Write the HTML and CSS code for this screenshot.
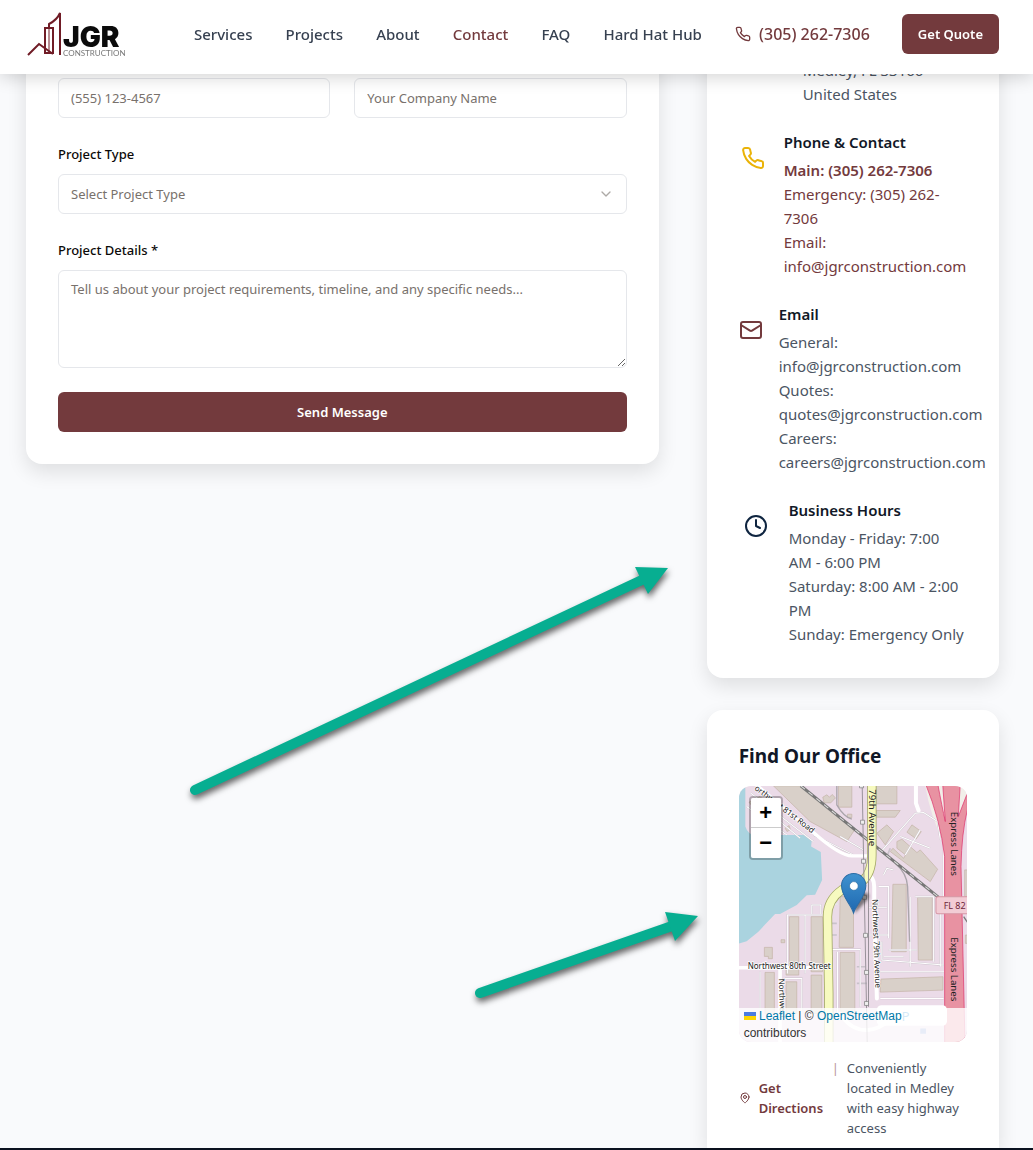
FILE: index.html
```html
<!DOCTYPE html>
<html lang="en">
<head>
<meta charset="utf-8">
<meta name="viewport" content="width=device-width, initial-scale=1">
<title>Contact | JGR Construction</title>
<link rel="stylesheet" href="styles.css">
</head>
<body>
<header class="header">
  <a class="logo" href="#" aria-label="JGR Construction">
    <svg width="104" height="50" viewBox="0 0 104 50">
      <g fill="none" stroke="#701c26" stroke-width="2">
        <path d="M2 45 L13 34 L27 44"/>
        <path d="M19 18 H27 V43 H19 Z" />
        <path d="M23 18 V43" stroke-width="1"/>
        <path d="M23 18 V14 Q31 10 34 3 V45"/>
      </g>
      <text class="logo-name" x="37" y="37">JGR</text>
      <text class="logo-sub" x="37" y="46">CONSTRUCTION</text>
    </svg>
  </a>
  <nav class="nav">
    <a href="#">Services</a>
    <a href="#">Projects</a>
    <a href="#">About</a>
    <a class="accent" href="#">Contact</a>
    <a href="#">FAQ</a>
    <a href="#">Hard Hat Hub</a>
    <a class="accent nav-phone" href="#">
      <svg class="icon" width="16" height="16" viewBox="0 0 24 24"><path d="M22 16.92v3a2 2 0 0 1-2.18 2 19.79 19.79 0 0 1-8.63-3.07 19.5 19.5 0 0 1-6-6 19.79 19.79 0 0 1-3.07-8.67A2 2 0 0 1 4.11 2h3a2 2 0 0 1 2 1.72 12.84 12.84 0 0 0 .7 2.81 2 2 0 0 1-.45 2.11L8.09 9.91a16 16 0 0 0 6 6l1.27-1.27a2 2 0 0 1 2.11-.45 12.84 12.84 0 0 0 2.81.7A2 2 0 0 1 22 16.92z"/></svg>
      (305) 262-7306
    </a>
  </nav>
  <button class="button" type="button">Get Quote</button>
</header>

<main class="main">
  <form class="card form-card">
    <div class="field-row">
      <input class="control" type="tel" placeholder="(555) 123-4567" aria-label="Phone">
      <input class="control" type="text" placeholder="Your Company Name" aria-label="Company">
    </div>
    <div class="field">
      <label for="type">Project Type</label>
      <div class="select-wrap">
        <select class="control" id="type"><option>Select Project Type</option></select>
        <svg class="icon chevron" width="16" height="16" viewBox="0 0 24 24"><path d="m6 9 6 6 6-6"/></svg>
      </div>
    </div>
    <div class="field">
      <label for="details">Project Details *</label>
      <textarea class="control details" id="details" placeholder="Tell us about your project requirements, timeline, and any specific needs..."></textarea>
    </div>
    <button class="button" type="submit">Send Message</button>
  </form>

  <aside class="sidebar">
    <section class="card info-card">
      <div class="info info-address">
        <p>Medley, FL 33166<br>United States</p>
      </div>
      <div class="info info-phone">
        <svg class="icon" width="24" height="24" viewBox="0 0 24 24"><path d="M22 16.92v3a2 2 0 0 1-2.18 2 19.79 19.79 0 0 1-8.63-3.07 19.5 19.5 0 0 1-6-6 19.79 19.79 0 0 1-3.07-8.67A2 2 0 0 1 4.11 2h3a2 2 0 0 1 2 1.72 12.84 12.84 0 0 0 .7 2.81 2 2 0 0 1-.45 2.11L8.09 9.91a16 16 0 0 0 6 6l1.27-1.27a2 2 0 0 1 2.11-.45 12.84 12.84 0 0 0 2.81.7A2 2 0 0 1 22 16.92z"/></svg>
        <div>
          <h3>Phone &amp; Contact</h3>
          <a class="strong" href="#">Main: (305) 262-7306</a>
          <a href="#">Emergency: (305) 262-<br>7306</a>
          <a href="#">Email:<br>info@jgrconstruction.com</a>
        </div>
      </div>
      <div class="info info-email">
        <svg class="icon" width="24" height="24" viewBox="0 0 24 24"><rect width="20" height="16" x="2" y="4" rx="2"/><path d="m22 7-8.97 5.7a1.94 1.94 0 0 1-2.06 0L2 7"/></svg>
        <div>
          <h3>Email</h3>
          <p>General:<br>info@jgrconstruction.com<br>Quotes:<br>quotes@jgrconstruction.com<br>Careers:<br>careers@jgrconstruction.com</p>
        </div>
      </div>
      <div class="info info-hours">
        <svg class="icon" width="24" height="24" viewBox="0 0 24 24"><circle cx="12" cy="12" r="10"/><path d="M12 6v6l4 2"/></svg>
        <div>
          <h3>Business Hours</h3>
          <p>Monday - Friday: 7:00<br>AM - 6:00 PM<br>Saturday: 8:00 AM - 2:00<br>PM<br>Sunday: Emergency Only</p>
        </div>
      </div>
    </section>

    <section class="card office-card">
      <h2>Find Our Office</h2>
      <div class="map">
        <svg class="map-canvas" viewBox="27 18 684 768" preserveAspectRatio="xMidYMid slice">
          <defs>
            <linearGradient id="pin" x1="0" y1="0" x2="0" y2="1"><stop offset="0" stop-color="#3f92cf"/><stop offset="1" stop-color="#1f68b0"/></linearGradient>
            <filter id="soft"><feGaussianBlur stdDeviation="5"/></filter>
            <path id="road81" d="M72 28 L250 164"/>
          </defs>
          <rect x="27" y="18" width="684" height="768" fill="#ebdbe8"/>
          <path d="M27 18H46V140Q55 168 80 165H225L245 180 243 200 272 216 276 300 255 344 230 346 200 375 150 402 135 402 85 455 50 484 27 490Z" fill="#aad3df"/>
          <path d="M585 18H711V60L690 170V786H645V200Q600 110 585 18Z" fill="#f2efe9"/>
          <path d="M690 200h21v586h-21z" fill="#ebdbe8"/>
          <g fill="#d9d0c9" stroke="#c2b2a5" stroke-width="2">
            <path d="M130 18H215L372 152 350 185 240 125Z"/>
            <path d="M278 52l12 -7 8 7 8-8 10 10-14 15-20 0z"/>
            <path d="M325 18H365V82H325Z M352 103h13v10h-13z M438 18H500V72H438Z M438 92H510L495 112H438Z"/>
            <path d="M440 160L470 135 490 155 465 195Z M545 135l28 20-15 22-28-20z M500 185L515 178 560 218 570 210 622 268 600 305 480 215 488 205 520 235 526 225 500 205Z"/>
            <path d="M488 313H528V515H484Z M562 352H606V540H564Z M452 597L638 590V630L450 636Z"/>
            <path d="M330 350H370V502H327Z M330 517H374V700H330Z M178 410H206V585H168V565H178Z M243 410H277V575H243Z M103 502h24v34h-12v-7h-12z M153 479h11v9h-11z"/>
            <path d="M105 577H133V700H105Z M168 605H200V700H168Z M243 585H275V700H243Z M703 270h8v80h-8z M705 465h6v25h-6z M57 67L90 50 120 80 80 95Z M165 145l12-8 4 12-10 6z"/>
          </g>
          <g fill="none" stroke="#c9c2ca" stroke-width="5">
            <path d="M172 580V405H278 M225 405V580 M90 575V700 M165 595H215V700 M305 372H325 M302 508H390V680 M322 515V700 M245 402V375H272V402 M445 320H475V475 M460 285 470 265 490 270 M455 485V540L640 555M450 575H642M450 655H640M540 350V560M555 350H610V545M630 350V560M640 110V380M455 212L555 100 580 98 622 125 630 180M525 225L570 150M510 170 600 205M475 510H560M460 530H520M480 205L470 230M300 430H320M300 465H320M380 560H405M380 610H410M415 382H470M405 465H475"/>
            <path d="M50 80 170 165M62 40 250 185M150 125 210 175M250 165 370 225M330 170 400 210"/>
          </g>
          <g fill="none" stroke="#fff" stroke-width="3">
            <path d="M172 580V405H278 M225 405V580 M90 575V700 M165 595H215V700 M305 372H325 M302 508H390V680 M322 515V700 M245 402V375H272V402 M445 320H475V475 M460 285 470 265 490 270 M455 485V540L640 555M450 575H642M450 655H640M540 350V560M555 350H610V545M630 350V560M640 110V380M455 212L555 100 580 98 622 125 630 180M525 225L570 150M510 170 600 205M475 510H560M460 530H520M415 382H470M405 465H475M50 80 170 165M62 40 250 185M150 125 210 175M250 165 370 225M330 170 400 210"/>
          </g>
          <g fill="none" stroke="#fff" stroke-linecap="round">
            <path d="M75 12L250 158Q330 228 365 228H412" stroke-width="10"/>
            <path d="M557 18V70L565 92M412 285Q432 290 432 320V380L440 655" stroke-width="12"/>
            <path d="M27 563H300M150 563V786M330 700Q360 750 410 750 450 745 470 725" stroke-width="11"/>
          </g>
          <path d="M320 18V75Q340 110 365 118M495 250Q530 280 532 320L538 485" fill="none" stroke="#aaa5ab" stroke-width="4"/>
          <path d="M212 18L625 352" stroke="#777" stroke-width="9"/>
          <path d="M212 18L625 352" stroke="#ddd" stroke-width="3" stroke-dasharray="16 14"/>
          <path d="M425 10V225Q425 280 395 305L335 330Q292 360 292 410L296 640V800" fill="none" stroke="#a5aa68" stroke-width="28"/>
          <path d="M425 10V225Q425 280 395 305L335 330Q292 360 292 410L296 640V800" fill="none" stroke="#f7fabf" stroke-width="23"/>
          <g fill="none" stroke="#989199" stroke-width="3"><path d="M396 18L411 786M415 190V680"/></g>
          <g fill="#eee" stroke="#777" stroke-width="2"><path d="M388 12h12v12h-12zM391 121h12v12h-12zM394 238h12v12h-12zM397 346h12v12h-12zM400 460h12v12h-12zM403 571h12v12h-12zM403 664h12v12h-12z"/></g>
          <g fill="#e892a2" stroke="#dc2a67" stroke-width="2">
            <path d="M585 10H622Q635 80 645 125L637 10H690L684 110 711 40V90Q694 160 692 260L704 790H643V230Q630 120 585 10Z"/>
          </g>
          <rect x="617" y="350" width="120" height="51" rx="6" fill="#f2ccd5" stroke="#d696a5" stroke-width="3"/>
          <path d="M700 410l12 18" stroke="#777" stroke-width="4"/>
          <g class="map-label">
            <text><textPath href="#road81">orthwest 81st Road</textPath></text>
            <text transform="translate(417 28) rotate(90)" class="map-label-lg">79th Avenue</text>
            <text transform="translate(426 358) rotate(88)">Northwest 79th Avenue</text>
            <text transform="translate(146 596) rotate(88)">Northwest</text>
            <text x="53" y="568">Northwest 80th Street</text>
            <text transform="translate(663 96) rotate(90)" class="map-label-lg">Express Lanes</text>
            <text transform="translate(663 472) rotate(90)" class="map-label-lg">Express Lanes</text>
          </g>
          <text class="shield" x="640" y="386">FL 82</text>
          <rect x="440" y="675" width="210" height="62" rx="14" fill="#fff"/>
          <text class="parking" x="514" y="722">P</text>
          <path d="M570 745h17v16h-17z" fill="#8ba4dc"/>
          <path d="M374 400L400 372Q425 350 410 338 390 335 376 360Z" fill="#222" opacity=".55" filter="url(#soft)"/>
          <path d="M370 399C362 372 334 350 334 317A36 36 0 0 1 407 317C407 350 379 372 370 399Z" fill="url(#pin)" stroke="#2b6ca5" stroke-width="3"/>
          <circle cx="371" cy="318" r="13" fill="#fff" stroke="#2b6ca5" stroke-width="2"/>
        </svg>
        <div class="zoom">
          <button type="button" aria-label="Zoom in">+</button>
          <button type="button" aria-label="Zoom out">−</button>
        </div>
        <div class="attribution">
          <a href="#"><svg width="12" height="8" viewBox="0 0 12 8"><path fill="#4c7be1" d="M0 0h12v4H0z"/><path fill="#ffd500" d="M0 4h12v4H0z"/></svg> Leaflet</a> | © <a href="#">OpenStreetMap</a><br>contributors
        </div>
      </div>
      <div class="directions">
        <a class="directions-link" href="#">
          <svg class="icon" width="12" height="12" viewBox="0 0 24 24"><path d="M20 10c0 6-8 12-8 12s-8-6-8-12a8 8 0 0 1 16 0Z"/><circle cx="12" cy="10" r="3"/></svg>
          <span>Get Directions</span>
        </a>
        <span class="divider">|</span>
        <p>Conveniently<br>located in Medley<br>with easy highway<br>access</p>
      </div>
    </section>
  </aside>
</main>
<footer class="footer"></footer>

<svg class="annotations" width="720" height="1020" viewBox="0 0 720 1020" aria-hidden="true">
  <g fill="#07ae91" stroke="#07ae91">
    <path d="M195 790L644 579" stroke-width="10" stroke-linecap="round"/>
    <path d="M635 567L668 568 648 594Z" stroke="none"/>
    <path d="M480 993L672 926" stroke-width="10" stroke-linecap="round"/>
    <path d="M665 912L698 916 675 941Z" stroke="none"/>
  </g>
</svg>
</body>
</html>
```
FILE: styles.css
```css
* { box-sizing: border-box; }

body {
  margin: 0;
  background: #f9fafc;
  color: #4b5563;
  font: 15px/24px "Noto Sans", "Open Sans", sans-serif;
}

h2, h3, p { margin: 0; }
a { color: inherit; text-decoration: none; }
button, input, select, textarea { font: inherit; }

.icon {
  flex: none;
  fill: none;
  stroke: currentColor;
  stroke-width: 2;
  stroke-linecap: round;
  stroke-linejoin: round;
}

.header {
  position: fixed;
  inset: 0 0 auto;
  z-index: 10;
  display: flex;
  align-items: flex-start;
  height: 74px;
  padding: 10px 34px 0 26px;
  background: #fff;
  box-shadow: 0 4px 16px rgba(0, 0, 0, .16);
}

.logo { display: flex; flex: none; margin-right: 64px; }
.logo-name { font: 900 28px Inter, sans-serif; fill: #0b0b0b; }
.logo-sub { font: 8px Lato, sans-serif; fill: #777; }

.nav {
  display: flex;
  flex: 1;
  justify-content: space-between;
  padding-top: 12px;
  color: #374151;
  font-weight: 500;
  white-space: nowrap;
}
.nav .accent { color: #733a3d; }
.nav-phone { display: flex; align-items: center; gap: 8px; font-size: 16px; }

.button {
  height: 40px;
  padding: 0 16px;
  border: 0;
  border-radius: 6px;
  background: #733a3d;
  color: #fff;
  font-size: 13px;
  font-weight: 600;
  white-space: nowrap;
}
.header .button { margin: 4px 0 0 32px; }

.main {
  display: grid;
  grid-template-columns: repeat(3, minmax(0, 1fr));
  column-gap: 48px;
  align-items: start;
  padding: 0 34px 0 26px;
}

.card {
  padding: 32px;
  border-radius: 16px;
  background: #fff;
  box-shadow: 0 8px 20px rgba(0, 0, 0, .11);
}

.form-card {
  grid-column: span 2;
  display: grid;
  gap: 24px;
  padding-top: 78px;
  border-radius: 0 0 16px 16px;
}
.field-row { display: grid; grid-template-columns: 1fr 1fr; gap: 24px; }
.field { display: grid; gap: 8px; }
.field label { color: #0c0a09; font-size: 13px; font-weight: 500; }

.control {
  width: 100%;
  height: 40px;
  padding: 0 12px;
  border: 1px solid #e5e7eb;
  border-radius: 6px;
  background: #fff;
  color: #78716c;
  font-size: 13px;
  line-height: 20px;
}
.control::placeholder { color: #78716c; opacity: 1; }
.details { display: block; height: 98px; padding: 8px 12px; resize: vertical; }

.select-wrap { display: grid; align-items: center; }
.select-wrap > * { grid-area: 1 / 1; }
.select-wrap select { appearance: none; }
.chevron { justify-self: end; margin-right: 13px; color: #78716c; opacity: .6; pointer-events: none; }

.sidebar { display: grid; grid-template-columns: minmax(0, 1fr); gap: 32px; }

.info-card {
  display: grid;
  gap: 24px;
  padding-top: 58px;
  border-radius: 0 0 16px 16px;
}
.info { display: grid; column-gap: 16px; justify-items: center; }
.info > div, .info > p { justify-self: start; white-space: nowrap; }
.info > .icon { margin-top: 16px; }
.info h3 { margin-bottom: 4px; color: #111827; font-size: 15px; font-weight: 600; line-height: 24px; }
.info a { display: block; color: #733a3d; }
.info .strong { font-weight: 600; }
.info-address { padding-left: 64px; }
.info-phone { grid-template-columns: 29px 1fr; }
.info-phone > .icon { color: #eab308; }
.info-email { grid-template-columns: 24px 1fr; }
.info-email > .icon { color: #733a3d; }
.info-hours { grid-template-columns: 34px 1fr; }
.info-hours > .icon { color: #0f2540; }

.office-card { padding-bottom: 10px; border-radius: 16px 16px 0 0; }
.office-card h2 { margin-bottom: 16px; color: #111827; font-size: 19px; font-weight: 700; line-height: 28px; }

.map {
  position: relative;
  height: 256px;
  overflow: hidden;
  border-radius: 12px;
}
.map-canvas { display: block; width: 100%; height: 100%; }
.map-label { font: 24px "Noto Sans", sans-serif; fill: #222; stroke: #fff; stroke-width: 4px; paint-order: stroke; }
.map-label-lg { font-size: 29px; stroke: none; }
.shield { font: 27px "Noto Sans", sans-serif; fill: #6d2639; }
.parking { font: 40px "Noto Sans", sans-serif; fill: #2a93d5; }

.zoom {
  position: absolute;
  top: 10px;
  left: 10px;
  display: grid;
  overflow: hidden;
  border: 2px solid rgba(0, 0, 0, .25);
  border-radius: 4px;
  background-clip: padding-box;
}
.zoom button {
  width: 30px;
  height: 30px;
  padding: 0;
  border: 0;
  background: #fff;
  color: #000;
  font: bold 22px/30px "Liberation Sans", sans-serif;
}
.zoom button:first-child { border-bottom: 1px solid #ccc; }

.attribution {
  position: absolute;
  inset: auto 0 0;
  padding: 0 5px;
  background: rgba(255, 255, 255, .8);
  color: #333;
  font: 12px/17px "Liberation Sans", sans-serif;
}
.attribution a { color: #0078a8; }

.directions {
  display: flex;
  align-items: flex-start;
  gap: 8px;
  margin-top: 16px;
  font-size: 13px;
  line-height: 20px;
}
.directions-link {
  display: flex;
  flex: none;
  align-items: center;
  align-self: center;
  gap: 8px;
  width: 85px;
  color: #733a3d;
  font-weight: 600;
}
.divider { color: #b9979a; }
.directions p { white-space: nowrap; }

.footer { height: 2px; background: #0b1220; }

.annotations {
  position: absolute;
  top: 0;
  left: 0;
  pointer-events: none;
  filter: drop-shadow(1px 4px 3px rgba(0, 0, 0, .6));
}
```
